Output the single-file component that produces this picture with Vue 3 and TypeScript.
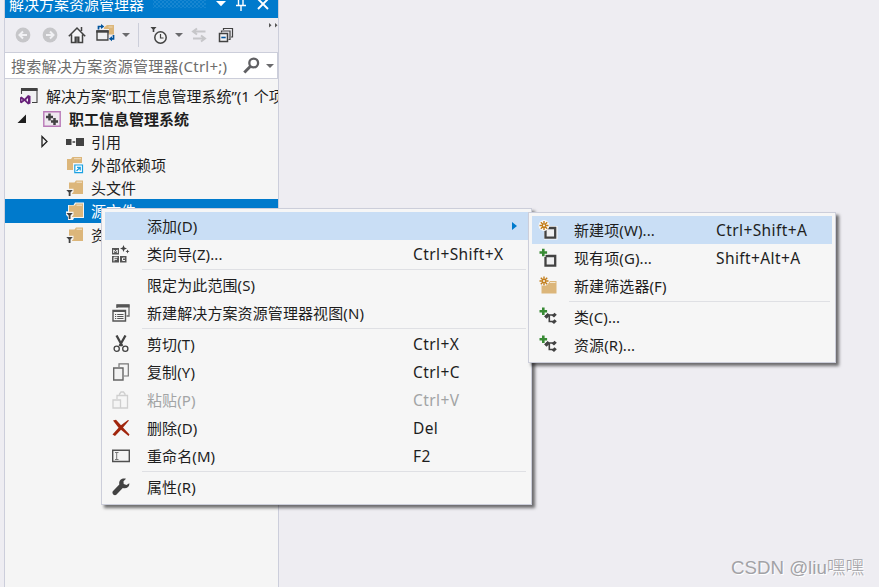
<template>
  <div class="ide">
    <svg class="defs" width="0" height="0" aria-hidden="true">
      <symbol id="back" viewBox="0 0 16 16">
        <circle cx="8" cy="8" r="7.400" fill="#c6c6c9" />
        <path d="M12 8H5M8 4.500 4.500 8 8 11.500" fill="none" stroke="#f1f1f4" stroke-width="2" />
      </symbol>
      <symbol id="forward" viewBox="0 0 16 16">
        <circle cx="8" cy="8" r="7.400" fill="#c6c6c9" />
        <path d="M4 8h7M8 4.500 11.500 8 8 11.500" fill="none" stroke="#f1f1f4" stroke-width="2" />
      </symbol>
      <symbol id="home" viewBox="0 0 18 18">
        <path d="M3.500 9v8h11V9L9 3.500z" fill="#f4f4f6" />
        <path d="M.8 10.200 9 2l8.200 8.200M3.500 8.500v8h11v-8M13.500 5V1" fill="none" stroke="#424242" stroke-width="1.500" />
        <path d="M6.500 10.500h5V17h-5z" fill="#424242" />
        <path d="M8.500 11.500h1V17h-1z" fill="#888" />
      </symbol>
      <symbol id="sync" viewBox="0 0 19 18">
        <path d="M8 3.500 11 1h7v12h-5V5H8z" fill="#dcb67a" />
        <path d="M12.500 3h4" stroke="#f0dfc2" stroke-width=".8" />
        <path d="M1 7h11v9H1z" fill="#f0f0f2" stroke="#424242" stroke-width="1.400" />
        <path d="M.3 6.300h12.400v2.400H.3z" fill="#424242" />
        <path d="M12.800 10.500H19V18h-6.200z" fill="#eeedf2" />
        <path d="M2.500 5.500V2.500h3M17.500 11v3.800h-2" fill="none" stroke="#00539c" stroke-width="1.700" />
        <path d="M5 0v5l3.300-2.500zM16 12.300v5l-3.200-2.500z" fill="#00539c" />
      </symbol>
      <symbol id="clock" viewBox="0 0 18 19">
        <circle cx="10.500" cy="11.500" r="5.700" fill="#f2f2f4" stroke="#424242" stroke-width="1.500" />
        <path d="M10.500 8v4h3" fill="none" stroke="#424242" stroke-width="1.200" />
        <path d="M.5 1h6L4.300 3.500V6H2.700V3.500z" fill="#424242" />
      </symbol>
      <symbol id="swap" viewBox="0 0 16 16">
        <path d="M14.500 4.500H3M6 1.500l-4 3 4 3M2 11.500h12M10 8.500l4 3-4 3" fill="none" stroke="#c6c6c9" stroke-width="2" />
      </symbol>
      <symbol id="collapse" viewBox="0 0 16 16">
        <path d="M5.500 3V1.500h9V10H13M3.500 5.500V4h8.500v8.500h-1.500" fill="none" stroke="#424242" stroke-width="1.200" />
        <path d="M1.500 6.500h8v8h-8z" fill="#f4f4f6" stroke="#424242" stroke-width="1.500" />
        <path d="M3.300 9.700h4.400v1.600H3.300z" fill="#00539c" />
      </symbol>
      <symbol id="search" viewBox="0 0 17 17">
        <circle cx="10.700" cy="6" r="4.400" fill="none" stroke="#606063" stroke-width="2.300" />
        <path d="M7.500 9.300 1.300 15.500" stroke="#606063" stroke-width="3" />
      </symbol>
      <symbol id="solution" viewBox="0 0 18 18">
        <path d="M1.500 7V2h15.500v13.500H12" fill="#f1f1f2" stroke="#424242" stroke-width="1.100" />
        <path d="M1 1h16.500v3H1z" fill="#424242" />
        <path d="m0 10.500 1.500-1 3 2.300L8 8l2.500 1v7.500L8 17.500l-3.500-3.500-3 2.300L0 15.500zm1.500 1.500v2l1.200-1zM8 11l-1.900 2L8 15z" fill="#68217a" fill-rule="evenodd" />
      </symbol>
      <symbol id="project" viewBox="0 0 18 16">
        <path d="M.8.800h16.400v14.400H.8z" fill="#eee8ef" stroke="#b979b8" stroke-width="1.400" />
        <path d="M6.500 2.500v7M3 6h7M11.500 7v7M8 10.500h7" fill="none" stroke="#424242" stroke-width="2.500" />
      </symbol>
      <symbol id="refs" viewBox="0 0 18 16">
        <path d="M0 5h5.500v6H0zM10 4h8v8h-8zM6.500 7.300h2.700v1.400H6.500z" fill="#424242" />
      </symbol>
      <symbol id="external" viewBox="0 0 18 18">
        <path d="M1 3h4l1.500-2H16v13H1z" fill="#dcb67a" />
        <path d="M8 2.700h7" stroke="#f0dfc2" />
        <path d="M7 7h11v11H7z" fill="#f5f5f5" />
        <path d="M8.800 9h7.700v7.700H8.800z" fill="#fff" stroke="#1ba1e2" stroke-width="1.200" />
        <path d="M10.500 15 13.500 12M11 11.300h3.200v3.200" fill="none" stroke="#1ba1e2" stroke-width="1.300" />
      </symbol>
      <symbol id="filter" viewBox="0 0 18 18">
        <path class="halo" d="M2 3h5.500L9 .5h9V16H8l-1 2H2v-3L0 12.500V9.500h2z" />
        <path d="M3 3.500h5.500L10 1.500h7v13.500H3z" fill="#dcb67a" />
        <path d="M10.500 3.200H16" stroke="#f3e6cf" />
        <path class="halo" d="M0 9.800h7.500V13L6 14.500V17H2v-2.500L0 12.500z" />
        <path d="M.3 11h6.500L4.500 13.500V17H2.700v-3.500z" fill="#424242" />
      </symbol>
      <symbol id="wizard" viewBox="0 0 18 18">
        <path d="M0 3h7v6.500H0zM0 11h7v6.500H0zM8 11h6.500v6.500H8z" fill="#555" />
        <path d="M1.700 8V5l1.800 1.500L5.300 5v3M2 16.300v-4h3.500M2 14.300h3M13 13h-2.500v2.500H13" fill="none" stroke="#f6f6f6" />
        <path d="m11.500 0 1 2.500 2.500 1-2.500 1-1 2.500-1-2.500L8 3.500l2.500-1zM15.500 4.500l.6 1.300 1.400.7-1.400.6-.6 1.400-.6-1.400-1.400-.6 1.400-.7z" fill="#424242" />
      </symbol>
      <symbol id="view" viewBox="0 0 18 18">
        <path d="M5 4V1h12v11h-2.500" fill="none" stroke="#686868" stroke-width="1.300" />
        <path d="M4.500.500h13v3h-13z" fill="#555" />
        <path d="M1 6.500h12.500V17H1z" fill="#f6f6f6" stroke="#555" stroke-width="1.400" />
        <path d="M1 6h12.500v2H1z" fill="#555" />
        <path d="M3 10.500h1.200m1 0H11.500M3 12.500h1.200m1 0H11.500M3 14.500h1.200m1 0H11.500" stroke="#555" />
      </symbol>
      <symbol id="cut" viewBox="0 0 18 18">
        <path d="m4.500.5 5.800 10.500M13.500.5 7.500 11" stroke="#424242" stroke-width="2.300" />
        <circle cx="4.700" cy="13.700" r="2.600" fill="none" stroke="#424242" stroke-width="1.300" />
        <circle cx="13.300" cy="13.700" r="2.600" fill="none" stroke="#424242" stroke-width="1.300" />
      </symbol>
      <symbol id="copy" viewBox="0 0 18 18">
        <path d="M7 4V.800h9.300V13H12" fill="none" stroke="#777" stroke-width="1.200" />
        <path d="M1.700 5H11v12H1.700z" fill="#f2f2f2" stroke="#666" stroke-width="1.400" />
      </symbol>
      <symbol id="paste" viewBox="0 0 18 18">
        <path d="M5 8V4.500h10.500V17H9M7.500 4.500V3L9 1h2.500L13 3v1.500" fill="none" stroke="#cfcfcf" stroke-width="1.300" />
        <path d="M1 9h7.500v8H1z" fill="#f4f4f4" stroke="#cfcfcf" stroke-width="1.300" />
      </symbol>
      <symbol id="delete" viewBox="0 0 18 18">
        <path d="M1 1.500 4 .8 9 6.300 16 1l1 .5-6 7 6.500 7L16.500 17 9 10.700 3 17 .5 15.500 6.600 8.700z" fill="#a1260d" />
      </symbol>
      <symbol id="rename" viewBox="0 0 18 18">
        <path d="M.7 3.200h16.600v11.300H.7z" fill="#f4f4f4" stroke="#505050" stroke-width="1.400" />
        <path d="M3 5.500h3.500M3 12.500h3.500M4.700 5.500v7" stroke="#777" />
      </symbol>
      <symbol id="wrench" viewBox="0 0 18 18">
        <path d="M17.300 5.200 14.500 7 11.700 6 11.500 3.300 14 .7C9.500-.3 6.500 2.500 7.300 6.500L.8 13.200c-1.400 2.300 1.400 5 3.500 3.600L10.800 10c4 .8 7-1 6.500-4.800z" fill="#424242" />
      </symbol>
      <symbol id="newItem" viewBox="0 0 20 20">
        <path d="M6 6h13.500v13.500H6z" fill="#fbfbfb" />
        <path d="M7.500 8h9.700v9.700H7.500z" fill="#efeff0" stroke="#424242" stroke-width="2.300" />
        <circle cx="6" cy="5.500" r="5.400" fill="#fbfbfb" />
        <path d="M6 1v9M1.500 5.500h9M2.800 2.300l6.400 6.400M9.200 2.300 2.800 8.700" stroke="#c27d1a" stroke-width="1.400" />
        <circle cx="6" cy="5.500" r="1" fill="#fbfbfb" />
      </symbol>
      <symbol id="existing" viewBox="0 0 20 20">
        <path d="M7.500 8h9.700v9.700H7.500z" fill="#efeff0" stroke="#424242" stroke-width="2.300" />
        <path d="M3.500 0h4v2.500H10v4H7.500V9h-4V7H1V2.500h2.500z" fill="#f6f6f6" />
        <path d="M5.300.700v7.600M1.500 4.500h7.600" stroke="#388a34" stroke-width="2.600" />
      </symbol>
      <symbol id="newFilter" viewBox="0 0 20 20">
        <path d="M3.500 7h7L12 5h6.500v12.500h-15z" fill="#dcb67a" />
        <path d="M12 6.500h5.500" stroke="#f3e6cf" />
        <circle cx="6" cy="5" r="5" fill="#f6f6f6" />
        <path d="M6 .5v9M1.500 5h9M2.800 1.800l6.400 6.400M9.200 1.800 2.800 8.200" stroke="#c27d1a" stroke-width="1.400" />
        <circle cx="6" cy="5" r="1" fill="#f6f6f6" />
      </symbol>
      <symbol id="addClass" viewBox="0 0 20 20">
        <path d="M5.300.500v7.600M1.500 4.300h7.600" stroke="#388a34" stroke-width="2.600" />
        <path d="m7 10 3-3M10 8h5M11.300 9v5.500H15" fill="none" stroke="#424242" stroke-width="1.600" />
        <path d="m6.200 9.300 3.600-3.200 2.300 2.500-3.600 3.200zM13.700 8.500l2.800-2.800 2.300 2-2.800 2.800zM13.700 15l2.800-2.800 2.300 2-2.800 2.800z" fill="#424242" />
      </symbol>
    </svg>

    <section class="explorer">
      <header class="title-bar">
        <span class="title">解决方案资源管理器</span>
        <span class="grip"></span>
        <svg class="title-buttons" width="56" height="18" viewBox="0 0 56 18" fill="none" stroke="#fff">
          <path d="M0 1h10L5 6.200z" fill="#fff" stroke="none" />
          <path d="M20 5.500h10M22.500 5V-1M27 5V-1M25 5.500V11" stroke-width="1.400" />
          <path d="m42-1 10 10M52-1 42 9" stroke-width="1.900" />
        </svg>
      </header>

      <div class="toolbar">
        <svg class="tool back"><use href="#back" /></svg>
        <svg class="tool forward"><use href="#forward" /></svg>
        <svg class="tool home"><use href="#home" /></svg>
        <svg class="tool sync"><use href="#sync" /></svg>
        <i class="caret"></i>
        <i class="divider"></i>
        <svg class="tool clock"><use href="#clock" /></svg>
        <i class="caret"></i>
        <svg class="tool swap"><use href="#swap" /></svg>
        <svg class="tool collapse"><use href="#collapse" /></svg>
        <svg class="overflow" width="10" height="5" viewBox="0 0 10 5" fill="#555">
          <path d="M1 0l2.500 2.200L1 4.500zM7 0l2.500 2.200L7 4.500z" />
        </svg>
      </div>

      <div class="search">
        <span class="placeholder">搜索解决方案资源管理器(Ctrl+;)</span>
        <svg class="search-icon"><use href="#search" /></svg>
        <i class="caret"></i>
      </div>

      <ul class="tree">
        <li
          v-for="node in nodes"
          :key="node.label"
          class="node"
          :class="[`level-${node.level}`, { bold: node.bold, selected: node.selected }]"
        >
          <span class="arrow">
            <svg v-if="node.arrow === 'open'" width="10" height="10" viewBox="0 0 10 10">
              <path d="M9 .5V9H.5z" fill="#1e1e1e" />
            </svg>
            <svg v-else-if="node.arrow === 'closed'" width="10" height="13" viewBox="0 0 10 13">
              <path d="M2 1.500v10l5-5z" fill="none" stroke="#1e1e1e" stroke-width="1.300" />
            </svg>
          </span>
          <svg class="node-icon"><use :href="`#${node.icon}`" /></svg>
          <span class="node-label">{{ node.label }}</span>
        </li>
      </ul>
    </section>

    <div
      v-for="menu in menus"
      :key="menu.name"
      class="menu"
      :class="menu.name"
    >
      <template v-for="(item, i) in menu.items" :key="i">
        <hr v-if="item === null" class="separator">
        <div v-else class="item" :class="{ active: item.active, disabled: item.disabled }">
          <span class="item-icon">
            <svg v-if="item.icon"><use :href="`#${item.icon}`" /></svg>
          </span>
          <span class="item-label">{{ item.label }}</span>
          <span class="shortcut">{{ item.keys }}</span>
          <i v-if="item.submenu" class="submenu-arrow"></i>
        </div>
      </template>
    </div>

    <span class="watermark">CSDN @liu嘿嘿</span>
  </div>
</template>

<script setup lang="ts">
interface TreeNode {
  label: string
  icon: string
  level: number
  arrow?: 'open' | 'closed'
  bold?: boolean
  selected?: boolean
}

interface MenuItem {
  label: string
  icon?: string
  keys?: string
  active?: boolean
  disabled?: boolean
  submenu?: boolean
}

interface Menu {
  name: string
  items: (MenuItem | null)[]
}

const nodes: TreeNode[] = [
  { label: '解决方案“职工信息管理系统”(1 个项目)', icon: 'solution', level: 0 },
  { label: '职工信息管理系统', icon: 'project', level: 1, arrow: 'open', bold: true },
  { label: '引用', icon: 'refs', level: 2, arrow: 'closed' },
  { label: '外部依赖项', icon: 'external', level: 2 },
  { label: '头文件', icon: 'filter', level: 2 },
  { label: '源文件', icon: 'filter', level: 2, selected: true },
  { label: '资源文件', icon: 'filter', level: 2 }
]

// null is a separator line
const menus: Menu[] = [
  {
    name: 'context-menu',
    items: [
      { label: '添加(D)', active: true, submenu: true },
      { label: '类向导(Z)...', icon: 'wizard', keys: 'Ctrl+Shift+X' },
      null,
      { label: '限定为此范围(S)' },
      { label: '新建解决方案资源管理器视图(N)', icon: 'view' },
      null,
      { label: '剪切(T)', icon: 'cut', keys: 'Ctrl+X' },
      { label: '复制(Y)', icon: 'copy', keys: 'Ctrl+C' },
      { label: '粘贴(P)', icon: 'paste', keys: 'Ctrl+V', disabled: true },
      { label: '删除(D)', icon: 'delete', keys: 'Del' },
      { label: '重命名(M)', icon: 'rename', keys: 'F2' },
      null,
      { label: '属性(R)', icon: 'wrench' }
    ]
  },
  {
    name: 'add-menu',
    items: [
      { label: '新建项(W)...', icon: 'newItem', keys: 'Ctrl+Shift+A', active: true },
      { label: '现有项(G)...', icon: 'existing', keys: 'Shift+Alt+A' },
      { label: '新建筛选器(F)', icon: 'newFilter' },
      null,
      { label: '类(C)...', icon: 'addClass' },
      { label: '资源(R)...', icon: 'addClass' }
    ]
  }
]
</script>

<style>
body {
  background: #eeedf2;
  overflow: hidden;
}
</style>

<style scoped>
.ide {
  position: relative;
  display: flex;
  box-sizing: border-box;
  width: 879px;
  height: 587px;
  padding-left: 4px;
  overflow: hidden;
  background: #eeedf2;
  color: #1e1e1e;
  font-family: "Noto Sans", "Noto Sans CJK SC", sans-serif;
  font-size: 15px;
  white-space: nowrap;
}

.defs {
  position: absolute;
}

.explorer {
  display: flex;
  flex-direction: column;
  box-sizing: border-box;
  width: 275px;
  height: 587px;
  border: solid #cccedb;
  border-width: 0 1px;
  background: #f5f5f5;
}

.title-bar {
  display: flex;
  height: 18px;
  background: #007acc;
  color: #fff;
  overflow: hidden;
}

.title {
  width: 148px;
  padding-left: 4px;
  box-sizing: border-box;
  line-height: 20px;
  margin-top: -6px;
}

.grip {
  width: 53px;
  height: 8px;
  background-image: radial-gradient(circle, #4ba3dd 0.5px, transparent 0.8px), radial-gradient(circle, #4ba3dd 0.5px, transparent 0.8px);
  background-size: 4px 4px;
  background-position: 0 0, 2px 2px;
}

.title-buttons {
  margin-left: 10px;
}

.toolbar {
  display: flex;
  align-items: center;
  height: 34px;
  background: #eeedf2;
}

.tool {
  width: 16px;
  height: 16px;
}

.back {
  margin-left: 10px;
}

.forward {
  margin-left: 11px;
}

.home {
  width: 18px;
  height: 18px;
  margin-left: 10px;
}

.sync {
  width: 19px;
  height: 18px;
  margin: -4px 0 0 10px;
}

.caret {
  flex: none;
  width: 0;
  height: 0;
  margin-left: 7px;
  border: 4px solid transparent;
  border-top-color: #6a6a6d;
  border-bottom-width: 0;
}

.divider {
  width: 1px;
  height: 24px;
  margin: 0 11px 0 8px;
  background: #ccceda;
}

.clock {
  width: 18px;
  height: 19px;
}

.swap {
  margin-left: 8px;
}

.collapse {
  margin-left: 11px;
}

.overflow {
  margin: -19px 0 0 34px;
}

.search {
  display: flex;
  align-items: center;
  box-sizing: border-box;
  height: 27px;
  padding-left: 6px;
  border: 1px solid #ccceda;
  border-left: 0;
  background: #fff;
  color: #6d6d6d;
}

.placeholder {
  width: 232px;
  line-height: 24px;
  letter-spacing: 0.25px;
}

.search-icon {
  width: 17px;
  height: 17px;
}

.search .caret {
  margin-left: 6px;
}

.tree {
  margin: 0;
  padding: 5px 0 0;
  list-style: none;
}

.node {
  display: flex;
  align-items: center;
  height: 23px;
  overflow: hidden;
}

.level-1 {
  padding-left: 12px;
}

.level-2 {
  padding-left: 35px;
}

.level-2 .node-icon {
  margin-left: 10px;
}

.level-2 .node-label {
  margin-left: 7px;
}

.arrow {
  display: flex;
  flex: none;
  width: 16px;
}

.node-icon {
  flex: none;
  width: 18px;
  height: 18px;
  margin-left: 10px;
}

.level-0 .arrow {
  width: 5px;
}

.node-label {
  margin-left: 8px;
  line-height: 23px;
  padding-top: 1px;
}

.bold {
  font-weight: 700;
}

.selected {
  height: 24px;
  background: #007acc;
  color: #fff;
}

.halo {
  fill: #f5f5f5;
}

.menu {
  position: absolute;
  box-sizing: border-box;
  padding: 3px;
  border: 1px solid #ccceda;
  background: #f6f6f6;
  box-shadow: 3px 3px 3px rgba(0, 0, 0, 0.55);
}

.context-menu {
  left: 101px;
  top: 208px;
  width: 431px;
}

.add-menu {
  left: 528px;
  top: 212px;
  width: 308px;
}

.item {
  display: flex;
  align-items: center;
  height: 28px;
}

.active {
  background: #c9def5;
}

.disabled {
  color: #a2a4a5;
}

.item-icon {
  display: flex;
  width: 42px;
  padding-left: 7px;
  padding-bottom: 1px;
  box-sizing: border-box;
}

.item-icon svg {
  width: 18px;
  height: 18px;
}

.add-menu .item-icon {
  padding-left: 6px;
}

.add-menu .item-icon svg {
  width: 20px;
  height: 20px;
}

.item-label {
  width: 266px;
  line-height: 28px;
  letter-spacing: 0.1px;
}

.add-menu .item-label {
  width: 142px;
}

.shortcut {
  width: 99px;
  font-size: 15.5px;
  line-height: 28px;
  letter-spacing: 0.4px;
}

.submenu-arrow {
  border: 4px solid transparent;
  border-left: 5px solid #007acc;
  border-right-width: 0;
}

.separator {
  height: 1px;
  margin: 1px 2px 1px 37px;
  border: 0;
  background: #dfe0e4;
}

.watermark {
  position: absolute;
  left: 731px;
  top: 555px;
  color: #a2a2a6;
  font-family: "Liberation Sans", "Noto Sans CJK SC", sans-serif;
  font-size: 18.7px;
  font-weight: 300;
  line-height: 26px;
  text-shadow: 1px 1px 0 #fff;
}
</style>
